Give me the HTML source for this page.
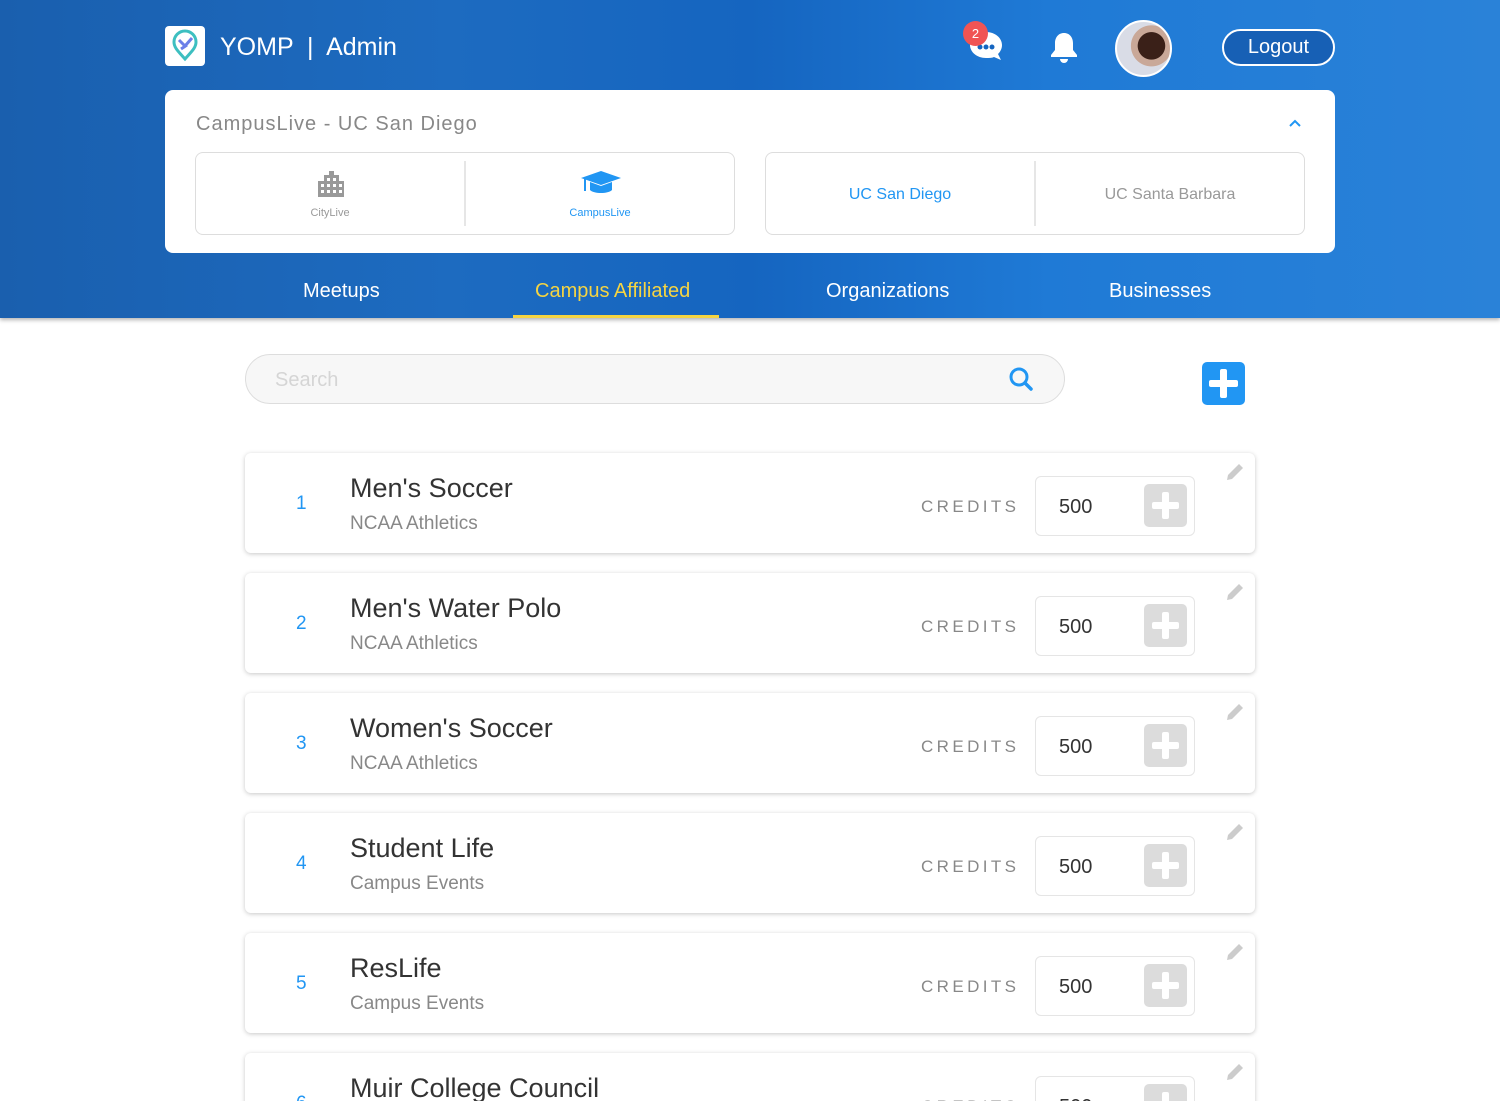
<!DOCTYPE html>
<html><head><meta charset="utf-8"><style>
*{margin:0;padding:0;box-sizing:border-box}
html,body{width:1500px;height:1101px;overflow:hidden}
body{background:#fff;font-family:"Liberation Sans",sans-serif;position:relative}
.hdr{position:absolute;left:0;top:0;width:1500px;height:318px;background:linear-gradient(90deg,#1a5fae 0%,#1d6bc0 30%,#1565c0 50%,#1f7ad6 70%,#2a82d8 100%);box-shadow:0 2px 4px rgba(0,0,0,.3)}
.abs{position:absolute}
.card{position:absolute;left:165px;top:90px;width:1170px;height:163px;background:#fff;border-radius:8px}
.box{position:absolute;top:62px;height:83px;border:1px solid #ddd;border-radius:8px}
.sep{position:absolute;top:8px;bottom:8px;width:2px;background:#e6e6e6}
.tab{position:absolute;top:280px;color:#fff;font-size:20px}
.row{position:absolute;left:245px;width:1010px;height:100px;background:#fff;border-radius:6px;box-shadow:0 1px 5px rgba(0,0,0,.22)}
.row .n{position:absolute;left:51px;top:40px;color:#2196f3;font-size:19px}
.row .t{position:absolute;left:105px;top:20px;color:#333;font-size:27px}
.row .s{position:absolute;left:105px;top:60px;color:#888;font-size:19px}
.row .c{position:absolute;left:676px;top:44px;color:#888;font-size:17px;letter-spacing:3.4px}
.row .b{position:absolute;left:790px;top:23px;width:160px;height:60px;border:1px solid #e5e5e5;border-radius:6px}
.row .b span{position:absolute;left:23px;top:19px;font-size:20px;color:#333}
.row .p{position:absolute;right:7px;top:7px;width:43px;height:43px;background:#dcdcdc;border-radius:5px}
.row .p:before{content:"";position:absolute;left:18px;top:8px;width:7px;height:27px;background:#fff;border-radius:2px}
.row .p:after{content:"";position:absolute;left:8px;top:18px;width:27px;height:7px;background:#fff;border-radius:2px}
.row svg.pen{position:absolute;right:9px;top:8px}
</style></head><body>
<div class="hdr"></div>
<div class="abs" style="left:165px;top:26px;width:40px;height:40px;background:#fff;border-radius:4px">
<svg width="40" height="40" viewBox="0 0 40 40"><path d="M20 33 C14 26 9 22 9 16 A11 11 0 0 1 31 16 C31 22 26 26 20 33Z" fill="none" stroke="#3dbfc0" stroke-width="3"/><path d="M14 14 L20 20 L27 12 M16 23 L22 19" fill="none" stroke="#6b7fe8" stroke-width="3"/></svg></div>
<div class="abs" style="left:220px;top:33px;color:#fff;font-size:25px">YOMP &nbsp;|&nbsp; Admin</div>
<svg class="abs" style="left:964px;top:24px" width="42" height="42" viewBox="0 0 42 42"><path d="M22 8c9 0 16 6 16 13 0 4-2 7-4 9l3 6-7-3c-2 1-5 1-8 1-9 0-16-6-16-13s7-13 16-13z" fill="#fff"/><circle cx="16" cy="23" r="2.5" fill="#1565c0"/><circle cx="22" cy="23" r="2.5" fill="#1565c0"/><circle cx="28" cy="23" r="2.5" fill="#1565c0"/></svg>
<div class="abs" style="left:963px;top:21px;width:25px;height:25px;border-radius:50%;background:#f05454;color:#fff;font-size:13px;text-align:center;line-height:25px">2</div>
<svg class="abs" style="left:1048px;top:30px" width="32" height="36" viewBox="0 0 32 36"><path d="M16 3c-6 0-9 5-9 10v7l-4 5v2h26v-2l-4-5v-7c0-5-3-10-9-10z" fill="#fff"/><path d="M12 29a4 4 0 0 0 8 0z" fill="#fff"/></svg>
<div class="abs" style="left:1115px;top:20px;width:57px;height:57px;border-radius:50%;border:2px solid #fff;background:radial-gradient(circle at 65% 45%,#3a2018 0 30%,#c9a898 31% 45%,#d9dce6 46%)"></div>
<div class="abs" style="left:1222px;top:29px;width:113px;height:37px;border:2px solid #fff;border-radius:19px;color:#fff;font-size:20px;text-align:center;line-height:33px;background:#1760b5">Logout</div>
<div class="card">
<div class="abs" style="left:31px;top:23px;color:#888;font-size:20px;letter-spacing:1px">CampusLive - UC San Diego</div>
<svg class="abs" style="left:1123px;top:28px" width="14" height="10"><path d="M2 8 L7 3 L12 8" fill="none" stroke="#2196f3" stroke-width="2"/></svg>
<div class="box" style="left:30px;width:540px">
<svg class="abs" style="left:120px;top:16px" width="30" height="30" viewBox="0 0 30 30"><path d="M2 28V12h6V6h5V2h5v4h5v6h5v16z" fill="#999"/><g fill="#fff"><rect x="5" y="15" width="3" height="3"/><rect x="11" y="15" width="3" height="3"/><rect x="17" y="15" width="3" height="3"/><rect x="23" y="15" width="3" height="3"/><rect x="5" y="21" width="3" height="3"/><rect x="11" y="21" width="3" height="3"/><rect x="17" y="21" width="3" height="3"/><rect x="23" y="21" width="3" height="3"/><rect x="11" y="9" width="3" height="3"/><rect x="17" y="9" width="3" height="3"/></g></svg>
<div class="abs" style="left:0;width:268px;top:54px;text-align:center;font-size:11px;color:#999">CityLive</div>
<div class="sep" style="left:268px"></div>
<div class="abs" style="left:385px;top:16px"><svg width="40" height="30" viewBox="0 0 40 30"><path d="M20 2 L40 9 L20 16 L0 9Z" fill="#2196f3"/><path d="M9 13v8c4 4 18 4 22 0v-8l-11 4z" fill="#2196f3"/><path d="M4 10v12" stroke="#2196f3" stroke-width="2"/></svg></div>
<div class="abs" style="left:270px;width:268px;top:54px;text-align:center;font-size:11px;color:#2196f3">CampusLive</div>
</div>
<div class="box" style="left:600px;width:540px">
<div class="abs" style="left:0;width:268px;top:33px;text-align:center;font-size:16px;color:#2196f3">UC San Diego</div>
<div class="sep" style="left:268px"></div>
<div class="abs" style="left:270px;width:268px;top:33px;text-align:center;font-size:16px;color:#999">UC Santa Barbara</div>
</div></div>
<div class="tab" style="left:303px">Meetups</div>
<div class="tab" style="left:535px;color:#f5d442">Campus Affiliated</div>
<div class="abs" style="left:513px;top:315px;width:206px;height:3px;background:#f5d442"></div>
<div class="tab" style="left:826px">Organizations</div>
<div class="tab" style="left:1109px">Businesses</div>
<div class="abs" style="left:245px;top:354px;width:820px;height:50px;border:1px solid #ddd;border-radius:25px;background:#f7f7f7"></div>
<div class="abs" style="left:275px;top:369px;font-size:20px;color:#d5d5d5">Search</div>
<svg class="abs" style="left:1008px;top:366px" width="26" height="26" viewBox="0 0 26 26"><circle cx="11" cy="11" r="8" fill="none" stroke="#2196f3" stroke-width="3"/><path d="M17 17l6 6" stroke="#2196f3" stroke-width="3.5" stroke-linecap="round"/></svg>
<div class="abs" style="left:1202px;top:362px;width:43px;height:43px;background:#2196f3;border-radius:5px"><div class="abs" style="left:18px;top:7px;width:7px;height:29px;background:#fff;border-radius:2px"></div><div class="abs" style="left:7px;top:18px;width:29px;height:7px;background:#fff;border-radius:2px"></div></div>

<div class="row" style="top:453px"><div class="n">1</div><div class="t">Men's Soccer</div><div class="s">NCAA Athletics</div><div class="c">CREDITS</div><div class="b"><span>500</span><div class="p"></div></div><svg class="pen" width="22" height="22" viewBox="0 0 22 22"><path d="M3 19l1-5L15 3l4 4L8 18z" fill="#ccc"/></svg></div>
<div class="row" style="top:573px"><div class="n">2</div><div class="t">Men's Water Polo</div><div class="s">NCAA Athletics</div><div class="c">CREDITS</div><div class="b"><span>500</span><div class="p"></div></div><svg class="pen" width="22" height="22" viewBox="0 0 22 22"><path d="M3 19l1-5L15 3l4 4L8 18z" fill="#ccc"/></svg></div>
<div class="row" style="top:693px"><div class="n">3</div><div class="t">Women's Soccer</div><div class="s">NCAA Athletics</div><div class="c">CREDITS</div><div class="b"><span>500</span><div class="p"></div></div><svg class="pen" width="22" height="22" viewBox="0 0 22 22"><path d="M3 19l1-5L15 3l4 4L8 18z" fill="#ccc"/></svg></div>
<div class="row" style="top:813px"><div class="n">4</div><div class="t">Student Life</div><div class="s">Campus Events</div><div class="c">CREDITS</div><div class="b"><span>500</span><div class="p"></div></div><svg class="pen" width="22" height="22" viewBox="0 0 22 22"><path d="M3 19l1-5L15 3l4 4L8 18z" fill="#ccc"/></svg></div>
<div class="row" style="top:933px"><div class="n">5</div><div class="t">ResLife</div><div class="s">Campus Events</div><div class="c">CREDITS</div><div class="b"><span>500</span><div class="p"></div></div><svg class="pen" width="22" height="22" viewBox="0 0 22 22"><path d="M3 19l1-5L15 3l4 4L8 18z" fill="#ccc"/></svg></div>
<div class="row" style="top:1053px"><div class="n">6</div><div class="t">Muir College Council</div><div class="s">Campus Events</div><div class="c">CREDITS</div><div class="b"><span>500</span><div class="p"></div></div><svg class="pen" width="22" height="22" viewBox="0 0 22 22"><path d="M3 19l1-5L15 3l4 4L8 18z" fill="#ccc"/></svg></div>
</body></html>
